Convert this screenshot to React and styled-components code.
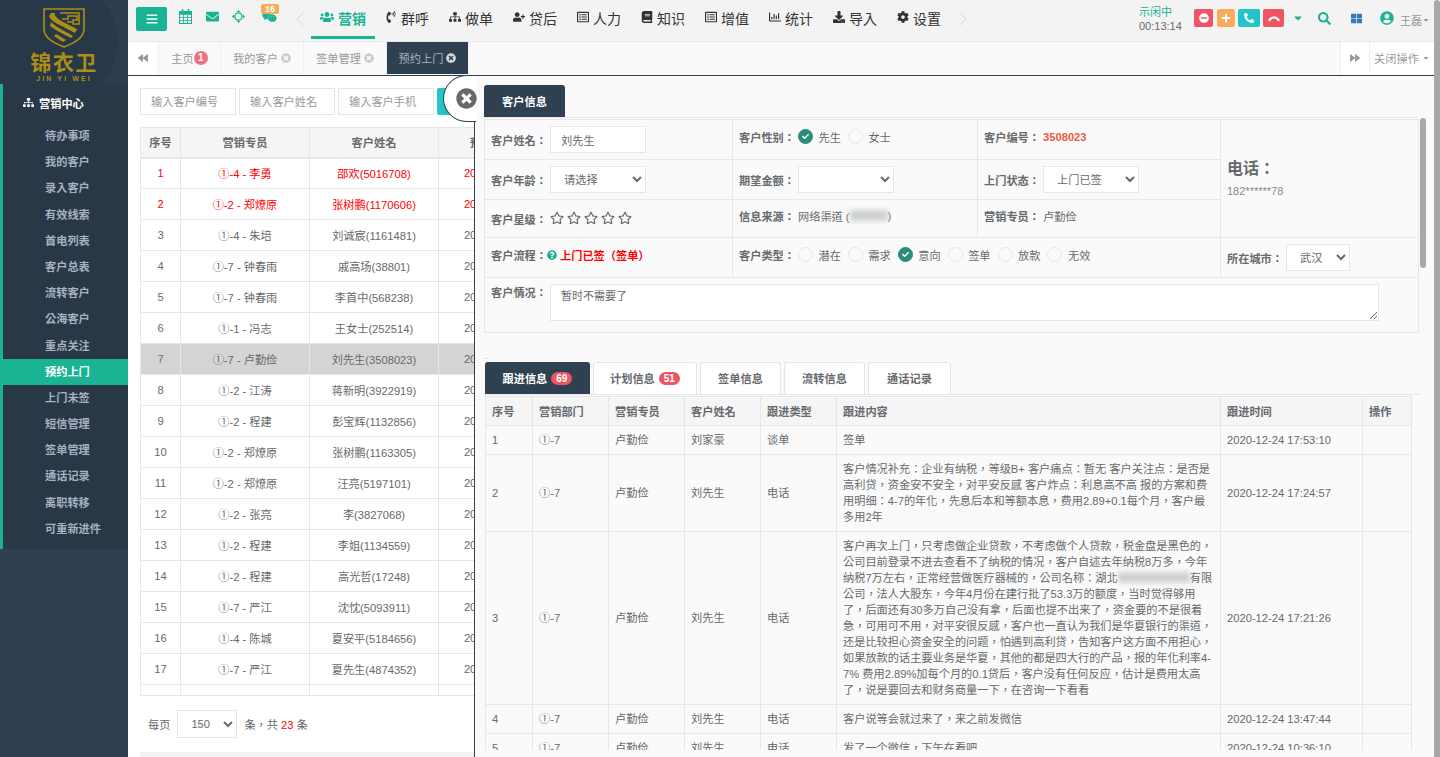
import React from 'react';
import styled, { createGlobalStyle } from 'styled-components';
import {
  FaBars, FaEnvelope, FaWeixin, FaUsers, FaPhoneVolume, FaSitemap,
  FaUserPlus, FaRegListAlt, FaBook, FaRegChartBar, FaDownload, FaCog, FaMinusCircle, FaPlus, FaPhoneAlt,
  FaSearch, FaThLarge, FaUserCircle, FaCaretDown, FaBackward, FaForward, FaTimesCircle, FaCheck,
  FaRegStar, FaQuestionCircle,
} from 'react-icons/fa';

const FONT = '"Liberation Sans", "Noto Sans CJK TC", sans-serif';

const Global = createGlobalStyle`
  html, body { margin: 0; padding: 0; height: 100%; overflow: hidden; background: #fff; }
  body { font-family: ${FONT}; font-size: 11.2px; color: #676a6c; }
  * { box-sizing: border-box; }
`;

const Shell = styled.div`display: flex; width: 1440px; height: 757px; overflow: hidden;`;

/* ---------- sidebar ---------- */
const Sidebar = styled.aside`width: 128px; flex: none; background: #2f4050; display: flex; flex-direction: column;`;
const Brand = styled.div`
  height: 84px; display: flex; flex-direction: column; align-items: center; padding-top: 8px; color: #ad8e14;
  background: radial-gradient(ellipse 66px 66px at 52px 42px, #273848 0 98%, #2c3d4d 100%);
`;
const BrandName = styled.div`font: bold 21px/22px ${FONT}; letter-spacing: 1.5px; margin-top: 4px;`;
const BrandSub = styled.div`font: bold 7px/8px ${FONT}; letter-spacing: 2.1px; margin-top: 1px;`;
const Nav = styled.nav`background: #293846; border-left: 3px solid #1ab394; height: 465px;`;
const NavHead = styled.div`
  height: 39px; display: flex; align-items: center; padding: 0 0 2px 20px; gap: 5px; color: #fff; font-weight: bold;
  svg { font-size: 11px; }
`;
const NavItem = styled.div`
  height: 26.2px; line-height: 26.2px; font-weight: bold;
  color: ${p => (p.$active ? '#fff' : '#a7b1c2')};
  background: ${p => (p.$active ? '#1ab394' : 'transparent')};
  margin-left: ${p => (p.$active ? '-3px' : '0')};
  padding-left: ${p => (p.$active ? '45px' : '42px')};
`;

/* ---------- main ---------- */
const Main = styled.main`flex: 1; min-width: 0; position: relative; display: flex; flex-direction: column; background: #fff;`;
const PageScroll = styled.div`width: 6px; flex: none; background: #a8a8a8; border-radius: 3px 3px 0 0;`;

const Topbar = styled.header`
  height: 42px; flex: none; background: #f3f3f4; border-bottom: 1px solid #e7eaec; display: flex; align-items: flex-start; padding-left: 8px;
`;
const MenuBtn = styled.div`
  width: 31px; height: 24px; margin-top: 7px; background: #1ab394; color: #fff; border-radius: 2px;
  display: flex; align-items: center; justify-content: center; font-size: 12px;
`;
const QuickIcon = styled.div`
  width: ${p => p.$w}px; margin-left: ${p => p.$ml}px; height: 36px; display: flex; align-items: center; justify-content: center;
  color: #1ab394; font-size: ${p => p.$size || 13}px; position: relative; padding-bottom: 4px; flex: none;
`;
const NumBadge = styled.span`
  position: absolute; top: 4px; left: 1px; width: 18px; height: 10px; background: #f8ac59; color: #fff; border-radius: 2px;
  font: bold 9px/10px ${FONT}; text-align: center;
`;
const Chevron = styled.div`
  width: 8px; flex: none; margin-left: ${p => p.$ml}px; margin-top: 12px; line-height: 0;
`;
const MainMenu = styled.nav`display: flex; margin-left: 7px; flex: none;`;
const MenuItem = styled.div`
  height: 39px; width: ${p => p.$w}px; display: flex; align-items: center; justify-content: center; gap: 4px;
  color: ${p => (p.$active ? '#1ab394' : '#333')}; font-weight: ${p => (p.$active ? 'bold' : 'normal')};
  border-bottom: 3px solid ${p => (p.$active ? '#1ab394' : 'transparent')};
  font-size: 14px;
  svg { font-size: ${p => (p.$active ? 14 : 12)}px; flex: none; margin-top: -2px; }
`;
const TopRight = styled.div`margin-left: auto; display: flex; align-items: flex-start; padding-right: 4px; height: 41px;`;
const Status = styled.div`width: 55px; padding-top: 5px; line-height: 14px; color: #676a6c; font-size: 11px;`;
const StatusIdle = styled.div`color: #1ab394;`;
const CallBtn = styled.div`
  width: ${p => p.$w}px; height: 18px; margin-top: 9px; margin-right: ${p => p.$mr}px; border-radius: 2px; background: ${p => p.$bg};
  color: #fff; font-size: 10px; display: flex; align-items: center; justify-content: center; flex: none;
`;
const TopIcon = styled.div`
  margin-left: ${p => p.$ml}px; margin-top: 10px; color: ${p => p.$c}; font-size: ${p => p.$size}px; line-height: 0; height: 16px; display: flex; align-items: center; flex: none;
`;
const UserName = styled.div`margin-left: 6px; margin-top: 12px; color: #999; font-size: 11px; display: flex; align-items: center; svg { font-size: 8px; }`;

const TabsBar = styled.div`
  height: 34px; flex: none; background: #fafafa; border-bottom: 1px solid #2f4050; display: flex; padding-bottom: 1px;
`;
const TabArrow = styled.div`
  width: ${p => p.$w}px; flex: none; display: flex; align-items: center; justify-content: center; color: #999; font-size: 10px;
  background: #fff; border-right: 1px solid #eee; border-left: ${p => (p.$left ? '1px solid #eee' : '0')};
`;
const PageTab = styled.div`
  width: ${p => p.$w}px; flex: none; display: flex; align-items: center; justify-content: center; gap: 3px;
  border-right: 1px solid #eee; color: ${p => (p.$active ? '#a7b1c2' : '#999')}; background: ${p => (p.$active ? '#2f4050' : 'transparent')};
  svg { font-size: 10px; color: ${p => (p.$active ? '#d5d8dc' : '#ccc')}; }
`;
const RoundBadge = styled.span`
  width: 14px; height: 14px; border-radius: 50%; background: #f1707f; color: #fff; font: bold 10px/14px ${FONT}; text-align: center; margin-left: -3px;
`;
const TabSpacer = styled.div`flex: 1;`;
const CloseOps = styled.div`
  width: 64px; flex: none; display: flex; align-items: center; justify-content: center; gap: 3px; color: #999; background: #fff;
  svg { font-size: 8px; }
`;

/* ---------- list behind the panel ---------- */
const ListArea = styled.section`flex: 1; min-height: 0; padding: 12px 0 0 12px; display: flex; flex-direction: column; position: relative;`;
const SearchRow = styled.div`display: flex; gap: 3px; height: 27px; margin-bottom: 12px;`;
const SearchInput = styled.input`
  width: 96px; height: 27px; border: 1px solid #e5e6e7; padding: 0 10px; font: 11.2px ${FONT}; background: #fff; color: #676a6c; outline: none;
  &::placeholder { color: #999; opacity: 1; }
`;
const SearchBtn = styled.div`width: 60px; height: 27px; background: #23c6c8; border-radius: 2px;`;
const ListScroll = styled.div`height: 569px; overflow: hidden; border-bottom: 1px solid #e7e7e7;`;
const ListTable = styled.table`border-collapse: collapse; table-layout: fixed; width: 406px; text-align: center;`;
const ListTh = styled.th`
  height: 30px; padding: 0; background: #f5f5f6; border: 1px solid #e7e7e7; border-bottom: 2px solid #e7e7e7; color: #676a6c; font-weight: bold; font-size: 11.2px; width: ${p => p.$w}px;
`;
const ListTd = styled.td`
  height: 31px; padding: 0; border: 1px solid #e7e7e7; white-space: nowrap; overflow: hidden; font-size: 11.2px;
  color: ${p => (p.$red ? '#f00' : '#676a6c')}; background: ${p => (p.$sel ? '#d4d4d4' : 'transparent')};
`;
const Pager = styled.div`display: flex; align-items: center; height: 28px; margin-top: 14px; padding-left: 8px; font-size: 11.2px; color: #676a6c; gap: 7px;`;
const PagerSelect = styled.select`
  width: 60px; height: 28px; border: 1px solid #e5e6e7; background: #fff; color: #676a6c; font: 11.2px ${FONT}; padding-left: 9px; border-radius: 0; margin: 0;
`;
const Red = styled.span`color: #f00;`;
const BottomBar = styled.div`position: absolute; left: 12px; right: 0; bottom: 0; height: 5px; background: #f3f3f4;`;

/* ---------- slide-over panel ---------- */
const Panel = styled.div`
  position: absolute; left: 346px; right: 0; top: 76px; bottom: 0; background: #fafafa; border-left: 1px solid #2f4050;
  padding: 9px 0 7px 9px; display: flex; flex-direction: column;
`;
const CloseShape = styled.div`
  position: absolute; left: -32px; top: -1px; width: 33px; height: 47px; background: #fff;
  border: 1px solid #2f4050; border-right: 0; border-radius: 23.5px 0 0 23.5px;
`;
const CloseIcon = styled.div`
  position: absolute; left: -19px; top: 12px; width: 22px; height: 22px; color: #676a6c; font-size: 21px; line-height: 0;
`;
const PanelScroll = styled.div`flex: 1; min-height: 0; overflow: hidden;`;
const InnerThumb = styled.div`position: absolute; right: 8px; top: 42px; width: 6px; height: 150px; background: #a8a8a8; border-radius: 3px;`;
const TabLine = styled.div`display: flex; gap: ${p => p.$gap || 0}px; border-bottom: 1px solid #e5e6e7; height: 33px; margin-left: ${p => p.$ml || 0}px; width: ${p => p.$width}px;`;
const PanelTab = styled.div`
  width: ${p => p.$w}px; height: 32px; flex: none; border-radius: 3px 3px 0 0; display: flex; align-items: center; justify-content: center; gap: 3px; font-weight: bold; padding-bottom: 1px;
  background: ${p => (p.$active ? '#2f4050' : '#fff')}; color: ${p => (p.$active ? '#fff' : '#676a6c')};
  border: 1px solid ${p => (p.$active ? '#2f4050' : '#e5e6e7')}; border-bottom: 0;
`;
const CountBadge = styled.span`
  background: #ed5565; color: #fff; font: bold 10px/13px ${FONT}; border-radius: 7px; padding: 0 5px; margin-left: 1px;
`;
const InfoTable = styled.table`border-collapse: collapse; table-layout: fixed; width: 934px; margin-top: 1px;`;
const InfoTd = styled.td`
  height: ${p => p.$h}px; border: 1px solid #e7e7e7; padding: 0 6px ${p => p.$pb || 0}px; vertical-align: ${p => (p.$top ? 'top' : 'middle')}; white-space: nowrap;
  width: ${p => (p.$w ? p.$w + 'px' : 'auto')}; padding-top: ${p => p.$pt || 0}px;
`;
const Field = styled.div`display: flex; align-items: ${p => (p.$top ? 'flex-start' : 'center')}; min-height: 16px; position: relative; top: ${p => p.$lift || 0}px;`;
const Label = styled.span`font-weight: bold; color: #676a6c; width: 59px; flex: none;`;
const TextInput = styled.input`
  width: 96px; height: 27px; border: 1px solid #e5e6e7; padding: 0 10px; font: 11.2px ${FONT}; color: #676a6c; background: #fff; outline: none;
`;
const Select = styled.select`
  width: ${p => p.$w || 96}px; height: 27px; border: 1px solid #e5e6e7; background: #fff; color: #676a6c; font: 11.2px ${FONT}; padding-left: 9px; border-radius: 0; margin: 0;
`;
const Radio = styled.span`
  width: 15px; height: 15px; border-radius: 50%; flex: none; margin-right: 5.5px; display: inline-flex; align-items: center; justify-content: center;
  background: ${p => (p.$on ? '#2a8d78' : '#fafafa')}; border: 1px solid ${p => (p.$on ? '#2a8d78' : '#e5e6e7')}; color: #fff; font-size: 7px;
`;
const RadioText = styled.span`margin-right: 7px; color: #676a6c;`;
const Stars = styled.div`display: flex; gap: 3px; color: #676a6c; font-size: 14px; position: relative; top: -1px;`;
const Strong = styled.span`font-weight: bold; color: ${p => p.$c};`;
const Process = styled.span`display: inline-flex; align-items: center; gap: 3px; color: #f00; font-weight: bold; margin-left: -3px; svg { color: #1ab394; font-size: 10px; }`;
const Blur = styled.span`display: inline-block; width: ${p => p.$w}px; height: 11px; background: #ced0d2; filter: blur(2.5px); vertical-align: -1px;`;
const PhoneTitle = styled.div`font: bold 16px/20px ${FONT}; margin-bottom: 6px;`;
const PhoneNum = styled.div`font-size: 11px; color: #888;`;
const NoteArea = styled.textarea`
  width: 829px; height: 37px; border: 1px solid #e5e6e7; padding: 3px 10px; background: #fff; font: 11px/16px ${FONT}; color: #676a6c; outline: none; display: block;
`;
const Dot = styled.div`height: 29px; line-height: 12px; padding: 18px 0 0 1px; font-size: 8px; color: #676a6c;`;
const FollowTable = styled.table`border-collapse: collapse; table-layout: fixed; width: 926px; margin: 1px 0 0 1px;`;
const FollowTh = styled.th`
  height: 29px; padding: 0 6px; text-align: left; font-weight: bold; color: #676a6c; font-size: 11.2px; border: 1px solid #e7e7e7; background: #f5f5f6; width: ${p => p.$w}px;
`;
const FollowTd = styled.td`
  padding: 6px; line-height: 16px; border: 1px solid #e7e7e7; color: #676a6c; font-size: 11.2px; white-space: nowrap; vertical-align: middle;
`;

const Logo = () => (
  <svg width="42" height="40" viewBox="0 0 42 40" fill="none" stroke="#ad8e14">
    <path d="M1 1H41V21C41 30 31 35 21 39C11 35 1 30 1 21Z" strokeWidth="1.6" />
    <path d="M8 5H12C10 10 24 16 34 21L32 25C22 19 7 14 6 8Z" fill="#ad8e14" stroke="none" />
    <path d="M8 14C14 20 24 24 30 28L28 30C20 26 12 22 7 18Z" fill="#ad8e14" stroke="none" />
    <path d="M13 26L23 32L20 34L11 28Z" fill="#ad8e14" stroke="none" />
    <path d="M17 5H36V16H30V12H34V8H25V11H19" strokeWidth="1.6" />
    <path d="M24 14H29" strokeWidth="1.6" />
  </svg>
);
const CalendarIcon = () => (
  <svg width="13" height="15" viewBox="0 0 13 15" fill="none" stroke="#1ab394" strokeWidth="1">
    <rect x="0.5" y="2.5" width="12" height="12" />
    <path d="M0.5 5.5H12.5M0.5 8.5H12.5M0.5 11.5H12.5M4.5 5.5V14.5M8.5 5.5V14.5" strokeWidth="0.8" />
    <rect x="0" y="2" width="13" height="3" fill="#1ab394" stroke="none" />
    <path d="M3.5 0V3M9.5 0V3" strokeWidth="1.6" />
  </svg>
);
const TargetIcon = () => (
  <svg width="13" height="13" viewBox="0 0 13 13" fill="#1ab394">
    <circle cx="6.5" cy="6.5" r="3.6" fill="none" stroke="#1ab394" strokeWidth="1.4" />
    <path d="M6.5 0L8.4 2H4.6ZM6.5 13L4.6 11H8.4ZM0 6.5L2 4.6V8.4ZM13 6.5L11 8.4V4.6Z" />
  </svg>
);
const ThinChevron = ({ d }) => (
  <svg width="8" height="14" viewBox="0 0 8 14" fill="none" stroke="#b5e6dc" strokeWidth="1"><path d={d} /></svg>
);
const Hangup = () => (
  <svg width="12" height="8" viewBox="0 0 12 8" fill="none" stroke="#fff" strokeWidth="2.2" strokeLinecap="round">
    <path d="M1.5 6C4 2.5 8 2.5 10.5 6" />
  </svg>
);

const menu = [
  [FaPhoneVolume, '群呼', 64], [FaSitemap, '做单', 64], [FaUserPlus, '贷后', 64], [FaRegListAlt, '人力', 64], [FaBook, '知识', 64],
  [FaRegListAlt, '增值', 64], [FaRegChartBar, '统计', 64], [FaDownload, '导入', 64], [FaCog, '设置', 64],
];
const navItems = ['待办事项', '我的客户', '录入客户', '有效线索', '首电列表', '客户总表', '流转客户', '公海客户', '重点关注', '预约上门', '上门未签', '短信管理', '签单管理', '通话记录', '离职转移', '可重新进件'];
const rows = [
  ['①-4 - 李勇', '邵欢(5016708)'], ['①-2 - 郑燎原', '张树鹏(1170606)'], ['①-4 - 朱培', '刘诚宸(1161481)'], ['①-7 - 钟春雨', '戚高场(38801)'],
  ['①-7 - 钟春雨', '李首中(568238)'], ['①-1 - 冯志', '王女士(252514)'], ['①-7 - 卢勤俭', '刘先生(3508023)'], ['①-2 - 江涛', '蒋新明(3922919)'],
  ['①-2 - 程建', '彭宝辉(1132856)'], ['①-2 - 郑燎原', '张树鹏(1163305)'], ['①-2 - 郑燎原', '汪亮(5197101)'], ['①-2 - 张亮', '李(3827068)'],
  ['①-2 - 程建', '李姐(1134559)'], ['①-2 - 程建', '高光哲(17248)'], ['①-7 - 严江', '沈忱(5093911)'], ['①-4 - 陈城', '夏安平(5184656)'],
  ['①-7 - 严江', '夏先生(4874352)'], ['①-2 - 张亮', '王先生(4874350)'],
];
const widths = [47, 76, 76, 76, 76, 384, 142, 49];
const heads = ['序号', '营销部门', '营销专员', '客户姓名', '跟进类型', '跟进内容', '跟进时间', '操作'];

const note2 = ['客户情况补充：企业有纳税，等级B+ 客户痛点：暂无 客户关注点：是否是', '高利贷，资金安不安全，对平安反感 客户炸点：利息高不高 报的方案和费', '用明细：4-7的年化，先息后本和等额本息，费用2.89+0.1每个月，客户最', '多用2年'];
const note3 = [
  '客户再次上门，只考虑做企业贷款，不考虑做个人贷款，税金盘是黑色的，',
  '公司目前登录不进去查看不了纳税的情况，客户自述去年纳税8万多，今年',
  <React.Fragment key="b">纳税7万左右，正常经营做医疗器械的，公司名称：湖北<Blur $w={72} />有限</React.Fragment>,
  '公司，法人大股东，今年4月份在建行批了53.3万的额度，当时觉得够用',
  '了，后面还有30多万自己没有拿，后面也提不出来了，资金要的不是很着',
  '急，可用可不用，对平安很反感，客户也一直认为我们是华夏银行的渠道，',
  '还是比较担心资金安全的问题，怕遇到高利贷，告知客户这方面不用担心，',
  '如果放款的话主要业务是华夏，其他的都是四大行的产品，报的年化利率4-',
  '7% 费用2.89%加每个月的0.1贷后，客户没有任何反应，估计是费用太高',
  '了，说是要回去和财务商量一下，在咨询一下看看',
];
const lines = arr => arr.map((l, i) => <div key={i}>{l}</div>);
const follows = [
  ['1', '①-7', '卢勤俭', '刘家豪', '谈单', '签单', '2020-12-24 17:53:10'],
  ['2', '①-7', '卢勤俭', '刘先生', '电话', lines(note2), '2020-12-24 17:24:57'],
  ['3', '①-7', '卢勤俭', '刘先生', '电话', lines(note3), '2020-12-24 17:21:26'],
  ['4', '①-7', '卢勤俭', '刘先生', '电话', '客户说等会就过来了，来之前发微信', '2020-12-24 13:47:44'],
  ['5', '①-7', '卢勤俭', '刘先生', '电话', '发了一个微信，下午在看吧', '2020-12-24 10:36:10'],
];

const RadioOpt = ({ on, children }) => (
  <>
    <Radio $on={on}>{on && <FaCheck />}</Radio>
    <RadioText>{children}</RadioText>
  </>
);

export default function App() {
  return (
    <Shell>
      <Global />
      <Sidebar>
        <Brand>
          <Logo />
          <BrandName>锦衣卫</BrandName>
          <BrandSub>JIN YI WEI</BrandSub>
        </Brand>
        <Nav>
          <NavHead><FaSitemap />营销中心</NavHead>
          {navItems.map(n => <NavItem key={n} $active={n === '预约上门'}>{n}</NavItem>)}
        </Nav>
      </Sidebar>
      <Main>
        <Topbar>
          <MenuBtn><FaBars /></MenuBtn>
          <QuickIcon $w={14} $ml={11}><CalendarIcon /></QuickIcon>
          <QuickIcon $w={14} $ml={13}><FaEnvelope /></QuickIcon>
          <QuickIcon $w={13} $ml={13}><TargetIcon /></QuickIcon>
          <QuickIcon $w={18} $ml={15} $size={15}>
            <FaWeixin />
            <NumBadge>16</NumBadge>
          </QuickIcon>
          <Chevron $ml={18}><ThinChevron d="M7.5 0.5L1 7L7.5 13.5" /></Chevron>
          <MainMenu>
            <MenuItem $w={64} $active><FaUsers />营销</MenuItem>
            {menu.map(([Icon, t, w]) => <MenuItem key={t} $w={w}><Icon />{t}</MenuItem>)}
          </MainMenu>
          <Chevron $ml={8}><ThinChevron d="M0.5 0.5L7 7L0.5 13.5" /></Chevron>
          <TopRight>
            <Status>
              <StatusIdle>示闲中</StatusIdle>
              00:13:14
            </Status>
            <CallBtn $w={19} $mr={4} $bg="#ed5565"><FaMinusCircle /></CallBtn>
            <CallBtn $w={18} $mr={3} $bg="#f8ac59"><FaPlus /></CallBtn>
            <CallBtn $w={22} $mr={3} $bg="#23c6c8"><FaPhoneAlt /></CallBtn>
            <CallBtn $w={21} $mr={0} $bg="#ed5565"><Hangup /></CallBtn>
            <TopIcon $ml={8} $c="#1ab394" $size={12}><FaCaretDown /></TopIcon>
            <TopIcon $ml={14} $c="#1ab394" $size={13}><FaSearch /></TopIcon>
            <TopIcon $ml={20} $c="#337ab7" $size={11}><FaThLarge /></TopIcon>
            <TopIcon $ml={18} $c="#1ab394" $size={14}><FaUserCircle /></TopIcon>
            <UserName>王磊<FaCaretDown /></UserName>
          </TopRight>
        </Topbar>
        <TabsBar>
          <TabArrow $w={31}><FaBackward /></TabArrow>
          <PageTab $w={62}>主页<RoundBadge>1</RoundBadge></PageTab>
          <PageTab $w={83}>我的客户<FaTimesCircle /></PageTab>
          <PageTab $w={83}>签单管理<FaTimesCircle /></PageTab>
          <PageTab $w={82} $active>预约上门<FaTimesCircle /></PageTab>
          <TabSpacer />
          <TabArrow $w={30} $left><FaForward /></TabArrow>
          <CloseOps>关闭操作<FaCaretDown /></CloseOps>
        </TabsBar>
        <ListArea>
          <SearchRow>
            <SearchInput placeholder="输入客户编号" />
            <SearchInput placeholder="输入客户姓名" />
            <SearchInput placeholder="输入客户手机" />
            <SearchBtn />
          </SearchRow>
          <ListScroll>
            <ListTable>
              <thead>
                <tr>
                  <ListTh $w={40}>序号</ListTh>
                  <ListTh $w={129}>营销专员</ListTh>
                  <ListTh $w={129}>客户姓名</ListTh>
                  <ListTh $w={108}>预约时间</ListTh>
                </tr>
              </thead>
              <tbody>
                {rows.map((r, i) => (
                  <tr key={i}>
                    {[String(i + 1), r[0], r[1], '2020-12-24'].map((c, j) => (
                      <ListTd key={j} $red={i < 2} $sel={i === 6}>{c}</ListTd>
                    ))}
                  </tr>
                ))}
              </tbody>
            </ListTable>
          </ListScroll>
          <Pager>
            每页
            <PagerSelect defaultValue="150"><option>150</option></PagerSelect>
            <span>条，共 <Red>23</Red> 条</span>
          </Pager>
          <BottomBar />
        </ListArea>
        <Panel>
          <CloseShape />
          <CloseIcon><FaTimesCircle /></CloseIcon>
          <InnerThumb />
          <PanelScroll>
            <TabLine $width={934}><PanelTab $w={81} $active>客户信息</PanelTab></TabLine>
            <InfoTable>
              <tbody>
                <tr>
                  <InfoTd $h={40} $w={248}><Field><Label>客户姓名：</Label><TextInput defaultValue="刘先生" /></Field></InfoTd>
                  <InfoTd $w={245}><Field $lift={-3}><Label>客户性别：</Label><RadioOpt on>先生</RadioOpt><RadioOpt>女士</RadioOpt></Field></InfoTd>
                  <InfoTd $w={243}><Field $lift={-3}><Label>客户编号：</Label><Strong $c="#ed5c42">3508023</Strong></Field></InfoTd>
                  <InfoTd $w={198} rowSpan={3} $pb={2}>
                    <PhoneTitle>电话：</PhoneTitle>
                    <PhoneNum>182******78</PhoneNum>
                  </InfoTd>
                </tr>
                <tr>
                  <InfoTd $h={40}><Field><Label>客户年龄：</Label><Select defaultValue="请选择"><option>请选择</option></Select></Field></InfoTd>
                  <InfoTd><Field><Label>期望金额：</Label><Select><option></option></Select></Field></InfoTd>
                  <InfoTd><Field><Label>上门状态：</Label><Select><option>上门已签</option></Select></Field></InfoTd>
                </tr>
                <tr>
                  <InfoTd $h={38}><Field><Label>客户星级：</Label><Stars><FaRegStar /><FaRegStar /><FaRegStar /><FaRegStar /><FaRegStar /></Stars></Field></InfoTd>
                  <InfoTd><Field $lift={-3}><Label>信息来源：</Label>网络渠道 (<Blur $w={38} />)</Field></InfoTd>
                  <InfoTd><Field $lift={-3}><Label>营销专员：</Label>卢勤俭</Field></InfoTd>
                </tr>
                <tr>
                  <InfoTd $h={40}><Field $lift={-3}><Label>客户流程：</Label><Process><FaQuestionCircle />上门已签（签单）</Process></Field></InfoTd>
                  <InfoTd colSpan={2}>
                    <Field $lift={-3}>
                      <Label>客户类型：</Label>
                      <RadioOpt>潜在</RadioOpt><RadioOpt>需求</RadioOpt><RadioOpt on>意向</RadioOpt>
                      <RadioOpt>签单</RadioOpt><RadioOpt>放款</RadioOpt><RadioOpt>无效</RadioOpt>
                    </Field>
                  </InfoTd>
                  <InfoTd><Field><Label>所在城市：</Label><Select $w={64}><option>武汉</option></Select></Field></InfoTd>
                </tr>
                <tr>
                  <InfoTd $h={55} colSpan={4} $top $pt={6}>
                    <Field $top><Label>客户情况：</Label><NoteArea defaultValue="暂时不需要了" /></Field>
                  </InfoTd>
                </tr>
              </tbody>
            </InfoTable>
            <Dot>.</Dot>
            <TabLine $width={935} $gap={3} $ml={1}>
              <PanelTab $w={105} $active>跟进信息<CountBadge>69</CountBadge></PanelTab>
              <PanelTab $w={104}>计划信息<CountBadge>51</CountBadge></PanelTab>
              <PanelTab $w={81}>签单信息</PanelTab>
              <PanelTab $w={81}>流转信息</PanelTab>
              <PanelTab $w={83}>通话记录</PanelTab>
            </TabLine>
            <FollowTable>
              <thead>
                <tr>{heads.map((h, i) => <FollowTh key={h} $w={widths[i]}>{h}</FollowTh>)}</tr>
              </thead>
              <tbody>
                {follows.map(r => (
                  <tr key={r[0]}>
                    {r.map((c, j) => <FollowTd key={j}>{c}</FollowTd>)}
                    <FollowTd />
                  </tr>
                ))}
              </tbody>
            </FollowTable>
          </PanelScroll>
        </Panel>
      </Main>
      <PageScroll />
    </Shell>
  );
}
